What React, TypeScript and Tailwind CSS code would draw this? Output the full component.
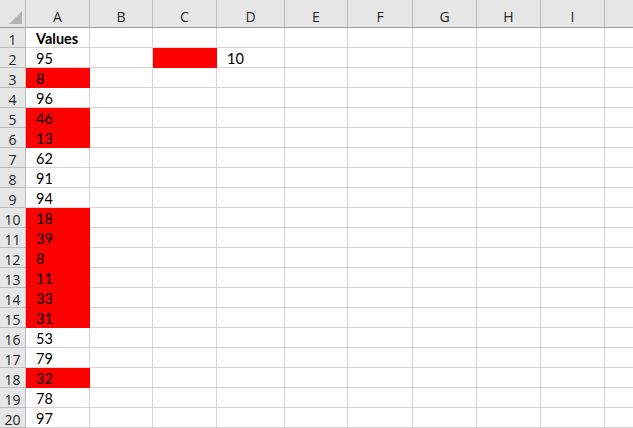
import React from "react";

const colWidths = [64, 63, 64, 68, 63, 65, 64, 64, 64, 29];
const colNames = ["A", "B", "C", "D", "E", "F", "G", "H", "I", ""];

const aValues: { v: string; red?: boolean; bold?: boolean }[] = [
  { v: "Values", bold: true },
  { v: "95" },
  { v: "8", red: true },
  { v: "96" },
  { v: "46", red: true },
  { v: "13", red: true },
  { v: "62" },
  { v: "91" },
  { v: "94" },
  { v: "18", red: true },
  { v: "39", red: true },
  { v: "8", red: true },
  { v: "11", red: true },
  { v: "33", red: true },
  { v: "31", red: true },
  { v: "53" },
  { v: "79" },
  { v: "32", red: true },
  { v: "78" },
  { v: "97" },
];

const cellFont = { fontFamily: "Lato, 'Open Sans', sans-serif" };
const headFont = { fontFamily: "'Open Sans', 'Noto Sans', sans-serif" };

export default function App() {
  return (
    <div className="w-[633px] h-[428px] overflow-hidden bg-white flex flex-col">
      {/* header row */}
      <div className="flex h-[28px] bg-[#e6e6e6] border-b border-[#9e9e9e] shrink-0">
        <div className="w-[26px] shrink-0 border-r border-[#bdbdbd] relative">
          <svg className="absolute right-[3px] bottom-[3px]" width="13" height="13" viewBox="0 0 13 13">
            <polygon points="13,0 13,13 0,13" fill="#b4b4b4" />
          </svg>
        </div>
        {colWidths.map((w, i) => (
          <div
            key={i}
            style={{ width: w, ...headFont }}
            className="shrink-0 border-r border-[#bdbdbd] flex items-center justify-center text-[14px] text-[#262626] pt-[5px]"
          >
            {colNames[i]}
          </div>
        ))}
      </div>
      {aValues.map((a, r) => (
        <div key={r} className="flex h-[20px] shrink-0">
          <div
            style={headFont}
            className="w-[26px] shrink-0 bg-[#e6e6e6] border-r border-b border-[#bdbdbd] flex items-center justify-center text-[14px] text-[#262626] pt-[3px]"
          >
            {r + 1}
          </div>
          {colWidths.map((w, c) => {
            let text = "";
            let red = false;
            let bold = false;
            if (c === 0) {
              text = a.v;
              red = !!a.red;
              bold = !!a.bold;
            }
            if (r === 1 && c === 2) red = true;
            if (r === 1 && c === 3) text = "10";
            return (
              <div
                key={c}
                style={{ width: w, ...cellFont }}
                className={
                  "shrink-0 border-r border-b flex items-center pl-[10px] pt-[3px] text-[14.5px] text-black leading-none " +
                  (red ? "bg-[#ff0000] border-[#ff0000]" : "border-[#d4d4d4]") +
                  (bold ? " font-bold" : "")
                }
              >
                {text}
              </div>
            );
          })}
        </div>
      ))}
    </div>
  );
}
